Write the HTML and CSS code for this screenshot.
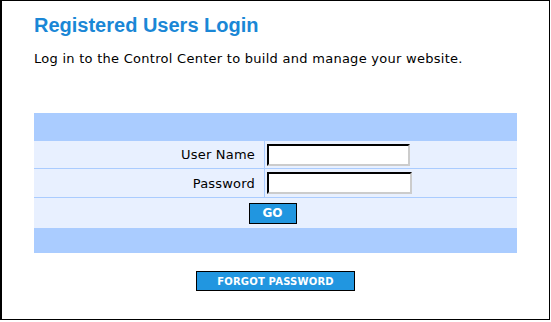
FILE: index.html
```html
<!DOCTYPE html>
<html lang="en">
<head>
    <meta charset="UTF-8">
    <title>Registered Users Login</title>
    <link rel="stylesheet" href="styles.css">
</head>
<body>
    <div class="frame">
        <h1>Registered Users Login</h1>
        <p class="intro">Log in to the Control Center to build and manage your website.</p>

        <form class="login">
            <table class="login-table">
                <tr class="band band-top"><td colspan="2"></td></tr>
                <tr class="row-user">
                    <td class="label">User Name</td>
                    <td class="field"><input type="text" class="user"></td>
                </tr>
                <tr class="row-pass">
                    <td class="label">Password</td>
                    <td class="field"><input type="password" class="pass"></td>
                </tr>
                <tr class="row-submit">
                    <td colspan="2" class="submit"><button type="submit" class="btn go">GO</button></td>
                </tr>
                <tr class="band band-bottom"><td colspan="2"></td></tr>
            </table>
        </form>

        <div class="forgot">
            <button type="button" class="btn forgot-btn">FORGOT PASSWORD</button>
        </div>
    </div>
</body>
</html>
```

FILE: styles.css
```css
html, body {
    margin: 0;
    padding: 0;
    background-color: white;
}

.frame {
    box-sizing: border-box;
    width: 550px;
    height: 320px;
    border-left: 2px solid #000;
    border-top: 1px solid #000;
    border-right: 1px solid #000;
    border-bottom: 1px solid #000;
    padding: 12px 0 0 32px;
    font-family: 'DejaVu Sans', Verdana, sans-serif;
}

h1 {
    margin: 0;
    font-family: 'Liberation Sans', Arial, sans-serif;
    font-size: 20px;
    font-weight: bold;
    color: #1a87d6;
    line-height: 24px;
}

.intro {
    margin: 13px 0 0;
    font-size: 13px;
    letter-spacing: 0.27px;
    color: #000;
    line-height: 17px;
}

.login {
    margin: 46px 0 0;
}

.login-table {
    width: 483px;
    border-collapse: separate;
    border-spacing: 0;
    background-color: #aaccff;
    font-size: 13px;
}

.login-table td {
    box-sizing: border-box;
    padding: 0;
    background-color: #e8f0ff;
    border-bottom: 1px solid #aaccff;
}

.band td {
    background-color: #aaccff;
}

.band-top td {
    height: 28px;
}

.row-user td {
    height: 28px;
}

.row-pass td {
    height: 29px;
}

.band-bottom td {
    height: 25px;
    border-bottom: none;
}

.login-table .label {
    width: 231px;
    text-align: right;
    padding-right: 9px;
    border-right: 1px solid #aaccff;
    letter-spacing: 0.2px;
}

.login-table .field {
    padding-left: 2px;
}

.field input {
    box-sizing: border-box;
    display: block;
    height: 22px;
    border: 2px inset #ccc;
    border-top-color: #555;
    border-left-color: #555;
    background: white;
}

.field .user {
    width: 143px;
}

.field .pass {
    width: 145px;
}

.login-table .submit {
    text-align: center;
    height: 30px;
    border-bottom: none;
}

.btn {
    background-color: #2196e0;
    color: white;
    border: 1px solid #000;
    font-family: 'DejaVu Sans', Verdana, sans-serif;
    font-weight: bold;
    cursor: pointer;
    padding: 0;
}

.go {
    width: 48px;
    height: 21px;
    font-size: 12px;
    margin-left: -6px;
    vertical-align: middle;
}

.forgot {
    width: 483px;
    padding-top: 18px;
}

.forgot-btn {
    display: block;
    margin: 0 auto;
    width: 159px;
    height: 20px;
    font-size: 10px;
    letter-spacing: 0.2px;
}
```
